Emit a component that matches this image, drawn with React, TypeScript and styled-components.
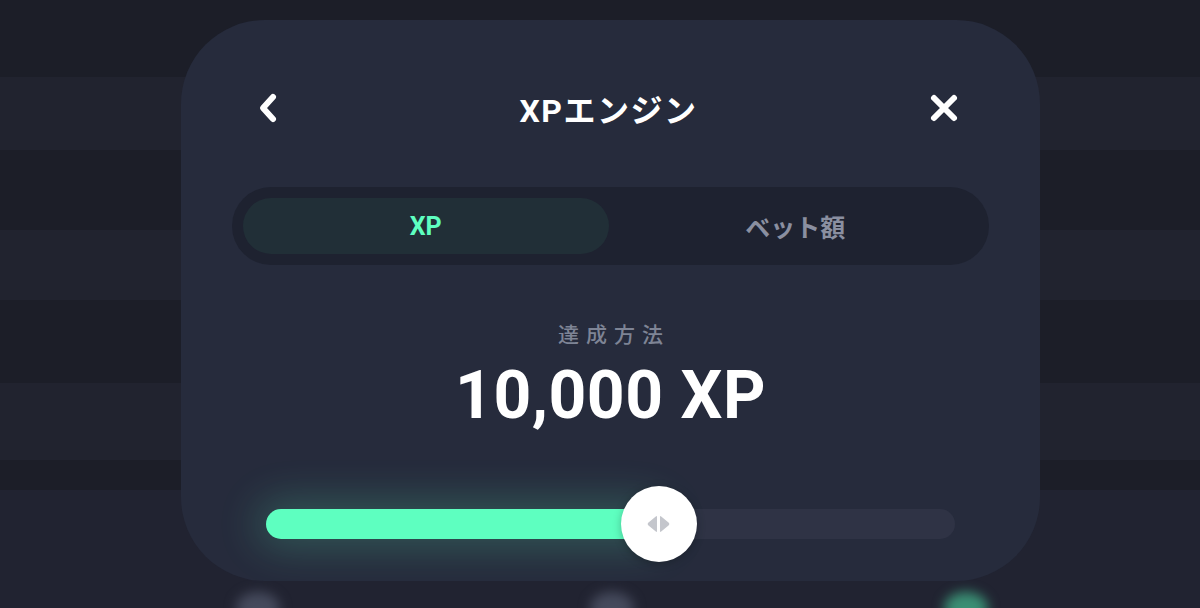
import styled, { createGlobalStyle } from "styled-components";

const GlobalStyle = createGlobalStyle`
    html, body {
        margin: 0;
        padding: 0;
        background: #1c1e28;
    }
    body {
        font-family: Roboto, "Noto Sans CJK JP", sans-serif;
    }
`;

const Page = styled.div`
    position: relative;
    width: 1200px;
    height: 608px;
    overflow: hidden;
    background: #1c1e28;
`;

const Backdrop = styled.div`
    display: flex;
    flex-direction: column;
    height: 100%;
`;

const BackdropRow = styled.div<{ $light?: boolean; $h: number }>`
    height: ${(p) => p.$h}px;
    flex-shrink: 0;
    background: ${(p) => (p.$light ? "#21232f" : "#1c1e28")};
`;

const NavBar = styled.div`
    flex: 1;
    background: #212331;
    display: flex;
    justify-content: space-between;
    align-items: flex-end;
    padding: 0 212px 0 236px;
`;

const NavDot = styled.div<{ $active?: boolean }>`
    width: 44px;
    height: 32px;
    margin-bottom: -16px;
    border-radius: 50%;
    background: ${(p) => (p.$active ? "#3a8f74" : "#454a5c")};
    filter: blur(6px);
`;

const Sheet = styled.section`
    position: absolute;
    left: 181px;
    top: 20px;
    width: 859px;
    height: 561px;
    box-sizing: border-box;
    border-radius: 84px;
    background: #262b3c;
    padding: 62px 51px 0;
    display: flex;
    flex-direction: column;
    align-items: center;
    overflow: hidden;
`;

const Header = styled.header`
    width: 100%;
    height: 52px;
    display: grid;
    grid-template-columns: 60px 1fr 60px;
    align-items: center;
    padding: 0 30px 0 26px;
    box-sizing: border-box;
`;

const IconButton = styled.button<{ $end?: boolean }>`
    background: none;
    border: none;
    padding: 0;
    display: flex;
    justify-content: ${(p) => (p.$end ? "flex-end" : "flex-start")};
    cursor: pointer;
`;

const Title = styled.h1`
    margin: 0;
    text-align: center;
    color: #ffffff;
    font-size: 32px;
    font-weight: 700;
    letter-spacing: 1.5px;
    font-family: Roboto, "Noto Sans CJK JP", sans-serif;
`;

const Tabs = styled.div`
    margin-top: 53px;
    width: 100%;
    height: 78px;
    box-sizing: border-box;
    padding: 11px;
    border-radius: 39px;
    background: #1e2230;
    display: grid;
    grid-template-columns: 1fr 1fr;
    gap: 4px;
`;

const Tab = styled.button<{ $active?: boolean }>`
    border: none;
    border-radius: 28px;
    background: ${(p) => (p.$active ? "#212f37" : "transparent")};
    color: ${(p) => (p.$active ? "#5effc0" : "#8a8fa0")};
    font-family: Roboto, "Noto Sans CJK JP", sans-serif;
    font-size: 25px;
    font-weight: 700;
    cursor: pointer;
`;

const Label = styled.div`
    margin-top: 53px;
    color: #7e8495;
    font-size: 21px;
    line-height: 30px;
    letter-spacing: 7px;
    padding-left: 7px;
    font-family: "Noto Sans CJK JP", sans-serif;
    font-weight: 500;
`;

const Value = styled.div`
    margin-top: 12px;
    color: #ffffff;
    font-size: 66px;
    line-height: 72px;
    font-weight: 700;
    font-family: Roboto, sans-serif;
    letter-spacing: 0.5px;
`;

const Slider = styled.div`
    position: relative;
    margin-top: 54px;
    width: 689px;
    height: 76px;
    display: flex;
    align-items: center;
`;

const Track = styled.div`
    width: 100%;
    height: 30px;
    border-radius: 15px;
    background: #2f3345;
`;

const Fill = styled.div`
    height: 100%;
    border-radius: 15px;
    background: #5effc0;
    box-shadow: 0 0 40px 10px rgba(94, 255, 192, 0.2);
`;

const Knob = styled.div`
    position: absolute;
    top: 0;
    width: 76px;
    height: 76px;
    margin-left: -38px;
    border-radius: 50%;
    background: #ffffff;
    display: flex;
    align-items: center;
    justify-content: center;
    box-shadow: 0 2px 8px rgba(0, 0, 0, 0.25);
`;

function BackIcon() {
    return (
        <svg width="24" height="32" viewBox="0 0 24 32">
            <path
                d="M15 5 L5 16 L15 27"
                fill="none"
                stroke="#fff"
                strokeWidth="6"
                strokeLinecap="round"
                strokeLinejoin="round"
            />
        </svg>
    );
}

function CloseIcon() {
    return (
        <svg width="30" height="30" viewBox="0 0 30 30">
            <path
                d="M5 5 L25 25 M25 5 L5 25"
                fill="none"
                stroke="#fff"
                strokeWidth="6"
                strokeLinecap="round"
            />
        </svg>
    );
}

function GripIcon() {
    return (
        <svg width="26" height="18" viewBox="0 0 26 18">
            <path
                d="M11 2 Q11 0.5 9.8 1.5 L2.2 7.8 Q1 9 2.2 10.2 L9.8 16.5 Q11 17.5 11 16 Z"
                fill="#c4c6cc"
            />
            <path
                d="M14 2 Q14 0.5 15.2 1.5 L22.8 7.8 Q24 9 22.8 10.2 L15.2 16.5 Q14 17.5 14 16 Z"
                fill="#c4c6cc"
            />
        </svg>
    );
}

const rows = [77, 73, 80, 70, 83, 77, 30];

export default function App() {
    const percent = 57;

    return (
        <Page>
            <GlobalStyle />
            <Backdrop>
                {rows.map((h, i) => (
                    <BackdropRow key={i} $h={h} $light={i % 2 === 1} />
                ))}
                <NavBar>
                    <NavDot />
                    <NavDot />
                    <NavDot $active />
                </NavBar>
            </Backdrop>

            <Sheet>
                <Header>
                    <IconButton>
                        <BackIcon />
                    </IconButton>
                    <Title>XPエンジン</Title>
                    <IconButton $end>
                        <CloseIcon />
                    </IconButton>
                </Header>

                <Tabs>
                    <Tab $active>XP</Tab>
                    <Tab>ベット額</Tab>
                </Tabs>

                <Label>達成方法</Label>
                <Value>10,000 XP</Value>

                <Slider>
                    <Track>
                        <Fill style={{ width: `${percent}%` }} />
                    </Track>
                    <Knob style={{ left: `${percent}%` }}>
                        <GripIcon />
                    </Knob>
                </Slider>
            </Sheet>
        </Page>
    );
}
